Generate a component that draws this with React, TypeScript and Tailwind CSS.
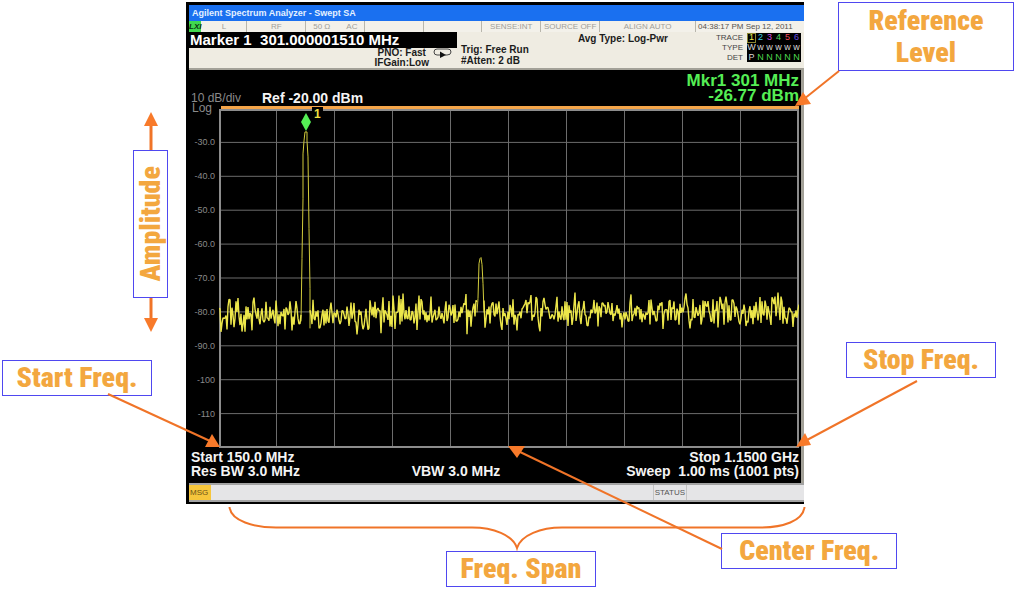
import type { ReactNode } from 'react'
import clsx from 'clsx'

const PLOT_W = 580
const PLOT_H = 340

const axisLabels = ['-30.0', '-40.0', '-50.0', '-60.0', '-70.0', '-80.0', '-90.0', '-100', '-110']

const traces = [
  { id: '1', type: 'W', det: 'P', color: 'text-[#f0ea50]' },
  { id: '2', type: 'w', det: 'N', color: 'text-[#3ccfe0]' },
  { id: '3', type: 'w', det: 'N', color: 'text-[#d04fe0]' },
  { id: '4', type: 'w', det: 'N', color: 'text-[#4fd860]' },
  { id: '5', type: 'w', det: 'N', color: 'text-[#f04858]' },
  { id: '6', type: 'w', det: 'N', color: 'text-[#6a50e0]' },
]

// isolated spikes that stand out of the noise floor, [x, y]
const spikes: [number, number][] = [
  [10, 191], [33, 222], [66, 221], [73, 222], [138, 226], [162, 225], [174, 187], [184, 185], [212, 188],
  [248, 226], [298, 222], [321, 223], [356, 184], [379, 218], [412, 186], [467, 185], [471, 220],
  [499, 219], [559, 184],
]

const mainPeak: [number, number][] = [
  [82, 213], [83, 150], [84, 90], [84, 45], [85, 32], [86, 23], [88, 23], [88, 32], [89, 48], [90, 120], [91, 180], [91, 220],
]

const smallPeak: [number, number][] = [
  [258, 204], [259, 190], [260, 155], [261, 150], [262, 149], [263, 156], [264, 175], [265, 204],
]

function buildNoise(from: number, to: number) {
  let seed = 7919 + from * 31
  const rand = () => {
    seed = (seed * 16807) % 2147483647
    return seed / 2147483647
  }
  const pts: [number, number][] = []
  for (let x = from; x <= to; x += 1) {
    const spike = spikes.find(([sx]) => sx === x)
    const centre = 206 - (x / PLOT_W) * 4
    const noise = (rand() + rand() - 1) * 19
    pts.push([x, spike ? spike[1] : centre + noise])
  }
  return pts
}

const toPoints = (pts: [number, number][]) => pts.map(([x, y]) => `${x},${y.toFixed(1)}`).join(' ')

const noiseSegments = [buildNoise(0, 82), buildNoise(91, 258), buildNoise(265, PLOT_W)].map(toPoints)
const peakSegments = [mainPeak, smallPeak].map(toPoints)

function Callout({ children, className }: { children: ReactNode; className?: string }) {
  return (
    <div
      className={clsx(
        "flex items-center justify-center border border-[#4f48f0] bg-white text-center font-['Liberation_Sans_Narrow','Roboto_Condensed','Roboto',sans-serif] text-[28px] leading-8 font-black whitespace-nowrap text-[#f3a73f]",
        className,
      )}
    >
      {children}
    </div>
  )
}

function StatusCell({ children, className }: { children?: ReactNode; className?: string }) {
  return (
    <div className={clsx('flex items-center justify-center overflow-hidden border-r border-[#b8b6ac] whitespace-nowrap', className)}>
      {children}
    </div>
  )
}

function MeasurementBar() {
  return (
    <div className="flex h-9 bg-[#efece2] text-[10px] leading-[11px] font-bold text-[#1c1c1c]">
      <div className="flex w-[268px] flex-col">
        <div className="h-4 bg-black pl-px text-[15px] leading-4 whitespace-pre text-white">Marker 1  301.000001510 MHz</div>
        <div className="flex justify-end gap-1 pr-1">
          <div className="text-center leading-[10px]">
            <div>PNO: Fast</div>
            <div>IFGain:Low</div>
          </div>
          <svg className="h-2.5 w-5" viewBox="0 0 20 10" fill="none">
            <path d="M7 7H4Q1 7 1 4Q1 1 4 1H15Q18 1 18 4Q18 7 14 7H12" stroke="#444" />
            <path d="M7 3.5L13 7L7 10Z" fill="#111" />
          </svg>
        </div>
      </div>
      <div className="flex-1 pt-3 pl-1">
        <div>Trig: Free Run</div>
        <div>#Atten: 2 dB</div>
      </div>
      <div className="pt-px pr-12">Avg Type: Log-Pwr</div>
      <table className="mt-px mr-[3px] h-[29px] border-collapse text-[9px] leading-[9px] font-normal">
        <tbody>
          <tr>
            <th className="pr-1 text-right text-[8px] font-normal text-[#444]">TRACE</th>
            {traces.map((t, i) => (
              <td key={t.id} className={clsx('w-[9px] bg-black p-0 text-center', t.color, i === 0 && 'outline outline-[#8a8630] -outline-offset-1')}>
                {t.id}
              </td>
            ))}
          </tr>
          <tr>
            <th className="pr-1 text-right text-[8px] font-normal text-[#444]">TYPE</th>
            {traces.map(t => (
              <td key={t.id} className="w-[9px] bg-black p-0 text-center text-[#d8d8d8]">{t.type}</td>
            ))}
          </tr>
          <tr>
            <th className="pr-1 text-right text-[8px] font-normal text-[#444]">DET</th>
            {traces.map((t, i) => (
              <td key={t.id} className={clsx('w-[9px] bg-black p-0 text-center', i === 0 ? 'text-[#d8d8d8]' : 'text-[#4fd84f]')}>
                {t.det}
              </td>
            ))}
          </tr>
        </tbody>
      </table>
    </div>
  )
}

function Plot() {
  return (
    <div className="flex">
      <div className="w-[30px] shrink-0 text-[#8a8a8a]">
        <div className="pl-[3px] text-xs leading-[10px]">Log</div>
        <div className="pt-3 pr-1 text-right text-[9px]">
          {axisLabels.map(l => (
            <div key={l} className="leading-[34px]">{l}</div>
          ))}
        </div>
      </div>
      <div className="relative min-w-0 flex-1 pt-[3px] pr-0.5">
        <div className="ml-0.5 h-[3px] bg-[#f5a54a]" />
        <svg className="block h-[339px] w-full" viewBox={`0 0 ${PLOT_W} ${PLOT_H}`} preserveAspectRatio="none" fill="none">
          <g stroke="#6c6c6c" strokeWidth="1" shapeRendering="crispEdges">
            {Array.from({ length: 9 }, (_, i) => (
              <path key={i} d={`M${(i + 1) * 58 - 0.5} 0V340M0 ${(i + 1) * 34 - 0.5}H580`} />
            ))}
          </g>
          <path d="M0 1H579V339H1V0" stroke="#8c8c8c" strokeWidth="2" />
          {peakSegments.map(p => (
            <polyline key={p} points={p} stroke="#d2cc3c" strokeWidth="1" />
          ))}
          {noiseSegments.map(p => (
            <polyline key={p} points={p} stroke="#ece64a" strokeWidth="1.4" strokeLinejoin="bevel" />
          ))}
          <path d="M87 4L92 13L87 22L82 13Z" fill="#55ee55" />
        </svg>
        <span className="absolute top-1 left-[16%] bg-black px-0.5 text-xs leading-[15px] font-bold text-[#f0e040]">1</span>
      </div>
    </div>
  )
}

function Analyzer() {
  return (
    <div className="bg-black pt-[3px] pb-0.5 pl-[3px]">
      <div className="h-4 bg-[#1a70f0] pl-[3px] text-[9px] leading-4 font-bold text-[#e4f0ff]">
        Agilent Spectrum Analyzer - Swept SA
      </div>
      <div className="grid h-[11px] grid-cols-[12fr_46fr_59fr_59fr_59fr_58fr_59fr_59fr_96fr_108fr] bg-[#f3f1ea] text-[8px] leading-[11px] text-[#a09e98]">
        <div className="bg-[#3fd84f] text-center font-bold text-[#0c3010] italic">LXI</div>
        <StatusCell>L</StatusCell>
        <StatusCell>RF</StatusCell>
        <StatusCell className="gap-4"><span>50 Ω</span><span>AC</span></StatusCell>
        <StatusCell />
        <StatusCell />
        <StatusCell>SENSE:INT</StatusCell>
        <StatusCell>SOURCE OFF</StatusCell>
        <StatusCell>ALIGN AUTO</StatusCell>
        <div className="pl-0.5 whitespace-nowrap text-[#55534e]">04:38:17 PM Sep 12, 2011</div>
      </div>
      <MeasurementBar />
      <div className="border-t-2 border-r-[3px] border-[#a3a198] bg-black">
        <div className="flex h-[33px] items-end pr-0.5 pl-0.5">
          <div className="w-[71px] text-xs leading-[10px] text-[#8a8a8a]">10 dB/div</div>
          <div className="flex-1 text-sm leading-[10px] font-bold text-[#f4f4f4]">Ref -20.00 dBm</div>
          <div className="text-right text-[17px] leading-[15px] font-bold text-[#55ee55]">
            <div>Mkr1 301 MHz</div>
            <div>-26.77 dBm</div>
          </div>
        </div>
        <Plot />
        <div className="grid grid-cols-3 pt-0.5 pr-0.5 pb-[5px] pl-0.5 text-sm leading-[14px] font-bold whitespace-nowrap text-[#f4f4f4]">
          <div>Start 150.0 MHz</div>
          <div />
          <div className="text-right">Stop 1.1500 GHz</div>
          <div>Res BW 3.0 MHz</div>
          <div className="pl-[18px]">VBW 3.0 MHz</div>
          <div className="flex justify-end whitespace-pre">Sweep  1.00 ms (1001 pts)</div>
        </div>
      </div>
      <div className="flex h-[19px] border-y-2 border-[#a3a3a3] bg-[#e5e5e7] text-[8px] leading-[15px]">
        <div className="w-[22px] bg-[#f6c63c] pl-px text-[#6c5418]">MSG</div>
        <div className="flex flex-1 justify-end">
          <div className="mr-[117px] border-x border-[#c4c4c4] px-px text-[#555]">STATUS</div>
        </div>
      </div>
    </div>
  )
}

function Arrows() {
  return (
    <svg className="pointer-events-none absolute inset-0 h-full w-full" viewBox="0 0 1023 592" preserveAspectRatio="none" fill="none">
      <g stroke="#f07428" strokeWidth="2">
        <path d="M839 71L804 99" />
        <path d="M108 394L210 441" />
        <path d="M917 381L807 440" />
        <path d="M722 549L518 451" />
        <path d="M229.500 507C231 521 254 527.500 276 527.500H472C493 527.500 513 535 517 548C521 535 541 527.500 562 527.500H760C783 527.500 803 521 804.500 507" />
      </g>
      <g fill="#f87a2a">
        <path d="M795 106L803 92L811 104Z" />
        <path d="M220 447L212 434L205 447Z" />
        <path d="M796 447L805 433L811 445Z" />
        <path d="M508 446L525 446L517 458Z" />
      </g>
    </svg>
  )
}

export default function App() {
  return (
    <div className="relative bg-white pt-0.5 font-['Liberation_Sans',Arial,sans-serif]">
      <div className="grid grid-cols-[186fr_618fr_219fr]">
        <div className="flex min-w-0 flex-col pt-[110px]">
          <div className="mr-[18px] flex w-[35px] flex-col items-center self-end">
            <svg className="h-[38px] w-4" viewBox="0 0 16 38">
              <path d="M8 12V38" stroke="#f07428" strokeWidth="3" />
              <path d="M8 0L15 14H1Z" fill="#f87a2a" />
            </svg>
            <Callout className="h-[148px] w-[35px]">
              <span className="rotate-180 [writing-mode:vertical-rl]">Amplitude</span>
            </Callout>
            <svg className="h-[34px] w-4" viewBox="0 0 16 34">
              <path d="M8 0V22" stroke="#f07428" strokeWidth="3" />
              <path d="M8 34L15 20H1Z" fill="#f87a2a" />
            </svg>
          </div>
          <Callout className="mt-7 ml-0.5 h-9 w-[150px]">Start Freq.</Callout>
        </div>

        <Analyzer />

        <div className="flex min-w-0 flex-col pl-[34px]">
          <Callout className="h-[69px] w-[176px]">
            <span>Reference<br />Level</span>
          </Callout>
          <Callout className="mt-[271px] ml-2 h-9 w-[150px]">Stop Freq.</Callout>
        </div>
      </div>

      <div className="flex items-start justify-between pt-[29px] pr-[12.300%] pb-[5px] pl-[43.600%]">
        <Callout className="mt-[18px] h-9 w-[150px]">Freq. Span</Callout>
        <Callout className="h-9 w-[176px]">Center Freq.</Callout>
      </div>
      <Arrows />
    </div>
  )
}
